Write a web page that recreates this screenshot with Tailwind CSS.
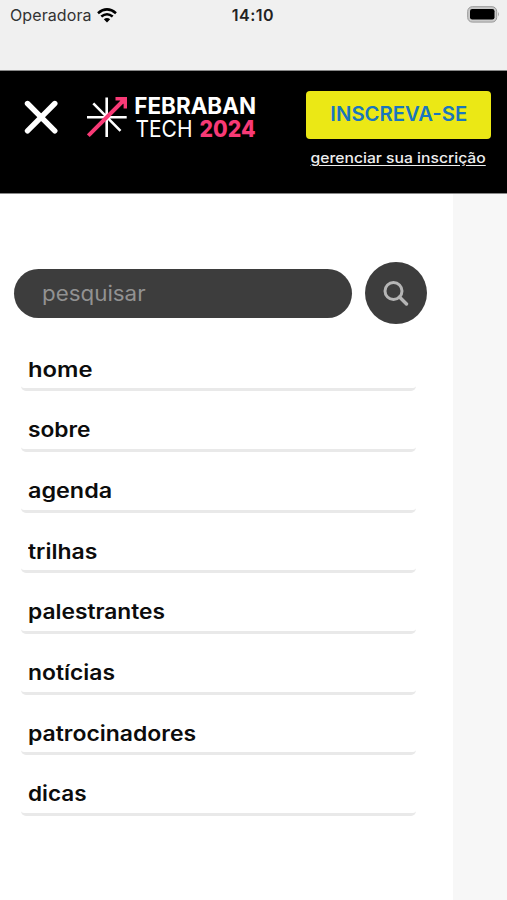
<!DOCTYPE html>
<html lang="pt-BR">
<head>
<meta charset="utf-8">
<title>FEBRABAN TECH 2024</title>
<script src="https://cdn.jsdelivr.net/npm/@tailwindcss/browser@4"></script>
</head>
<body class="w-[507px] h-[900px] overflow-hidden bg-[#f7f7f7] font-['Inter',sans-serif] flex flex-col">
  <div class="h-[71px] shrink-0 bg-[#f0f0f0] border-b border-[#888] grid grid-cols-3 items-start pt-[5px] pl-[10px] pr-[7px] text-[#222]">
    <div class="flex items-center h-5">
      <span class="w-[81px] text-[16px] leading-5 tracking-[0.1px] whitespace-nowrap text-[#333]">Operadora</span>
      <svg class="ml-[6px] w-5 h-[15px]" viewBox="0 0 20 15" fill="none" stroke="#000" stroke-width="2.6"><path d="M1 5.2Q10-2.4 19 5.2M4.3 8.6Q10 3.9 15.7 8.6"/><path d="M6.8 11.2Q10 8.6 13.2 11.2L10 14.6Z" fill="#000" stroke="none"/></svg>
    </div>
    <div class="text-center text-[16px] leading-5 font-semibold tracking-[0.5px] pr-[4px]">14:10</div>
    <div class="flex justify-end pt-[1px]">
      <svg class="w-[33px] h-[17px]" viewBox="0 0 33 17"><rect x=".7" y=".7" width="29" height="15.4" rx="4.6" fill="#c9c9c9" stroke="#999"/><rect x="3" y="3" width="24.5" height="10.5" rx="2.2"/><path d="M31 6q2 2.2 0 4.4z" fill="#aaa"/></svg>
    </div>
  </div>
  <header class="h-[123px] shrink-0 bg-black border-b border-[#888] flex items-start text-white">
    <svg class="mt-[29px] ml-[24px] w-[34px] h-[34px]" viewBox="0 0 34 34" stroke="#fff" stroke-width="5.4" stroke-linecap="round"><path d="M3.5 3.5l27.3 27.3M30.8 3.5L3.5 30.8"/></svg>
    <svg class="mt-[25px] ml-[29px] w-[41px] h-[42px]" viewBox="0 0 41 42" fill="none"><path d="M19.7 1.5v39.5M0 21.2h39.7M6.3 7.4l27.2 27.4" stroke="#fff" stroke-width="2.6"/><path d="M1.3 39.7L36 5" stroke="#f83a76" stroke-width="4"/><path d="M28.5 1H40v11.5h-3.4V8L33 4.4h-4.5z" fill="#f83a76"/><path d="M32 2h7v7z" fill="#f83a76"/></svg>
    <svg class="mt-[18px] ml-[7px] w-[124px] h-[56px]" viewBox="0 0 124 56" font-family="Inter, sans-serif" font-size="23"><text x="-.7" y="24.6" textLength="121.7" lengthAdjust="spacingAndGlyphs" fill="#fff" font-weight="700">FEBRABAN</text><text x=".5" y="47.5" textLength="57" lengthAdjust="spacingAndGlyphs" fill="#fff" font-weight="400">TECH</text><text x="64.5" y="47.5" textLength="56" lengthAdjust="spacingAndGlyphs" fill="#f83a76" font-weight="800">2024</text></svg>
    <div class="ml-[47px] mt-[20px] w-[185px]">
      <div class="h-[48px] rounded-[4px] bg-[#ebe815] text-[#1976bd] text-center"><span class="inline-block origin-center scale-x-[1.04] font-semibold text-[19.5px] leading-[47px] whitespace-nowrap">INSCREVA-SE</span></div>
      <div class="mt-[8px] flex justify-center"><span class="inline-block scale-x-[1.12] text-[14px] leading-[22px] font-medium underline underline-offset-2 whitespace-nowrap text-[#eee]">gerenciar sua inscrição</span></div>
    </div>
  </header>
  <main class="w-[453px] flex-1 bg-white pt-[68px]">
    <div class="flex items-center pl-[14px] gap-[13px]">
      <div class="w-[338px] h-[49px] rounded-full bg-[#3d3d3d] pl-[28px] text-[#929292]"><span class="inline-block origin-left scale-x-[1.09] text-[20.5px] leading-[49px]">pesquisar</span></div>
      <div class="w-[62px] h-[62px] rounded-full bg-[#3d3d3d] flex items-center justify-center">
        <svg class="w-[26px] h-[26px]" viewBox="0 0 26 26" fill="none" stroke="#b5b5b5" stroke-width="3"><circle cx="10.5" cy="11" r="8.5"/><path d="M16.5 17l7 7" stroke-width="3.4" stroke-linecap="round"/></svg>
      </div>
    </div>
    <nav class="mt-[6.8px] ml-[21px] w-[395px] text-[20.5px] font-semibold text-[#0c0c0c] [&>div]:h-[60.65px] [&>div]:border-b-3 [&>div]:border-[#e9e9e9] [&>div]:rounded-b-[5px] [&>div]:pl-[7px] [&>div]:pt-[25px] [&>div]:leading-[28px] [&_span]:inline-block [&_span]:origin-left">
      <div><span class="scale-x-[1.16]">home</span></div>
      <div><span class="scale-x-[1.11]">sobre</span></div>
      <div><span class="scale-x-[1.14]">agenda</span></div>
      <div><span class="scale-x-[1.12]">trilhas</span></div>
      <div><span class="scale-x-[1.11]">palestrantes</span></div>
      <div><span class="scale-x-[1.115]">notícias</span></div>
      <div><span class="scale-x-[1.12]">patrocinadores</span></div>
      <div><span class="scale-x-[1.1]">dicas</span></div>
    </nav>
  </main>
</body>
</html>
